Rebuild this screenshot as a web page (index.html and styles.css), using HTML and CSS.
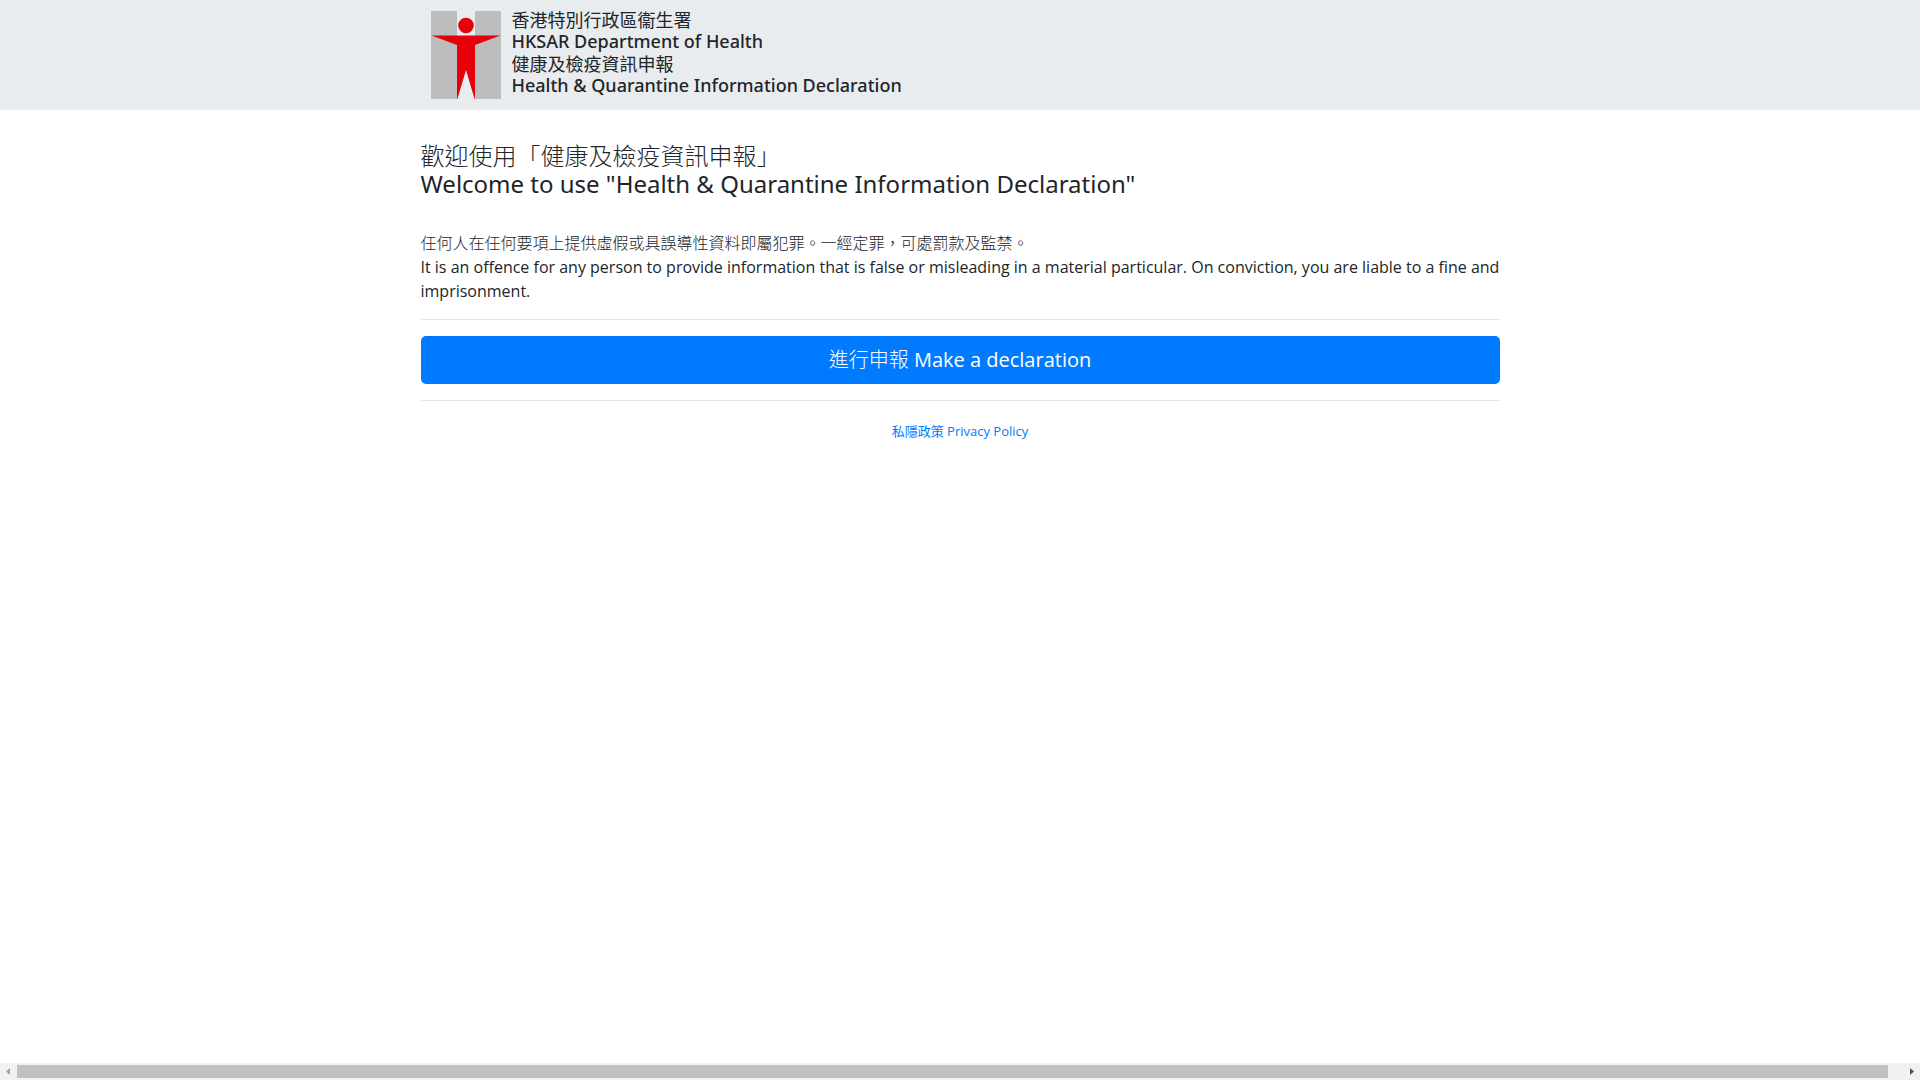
FILE: index.html
```html
<!DOCTYPE html>
<html lang="zh-Hant-HK">
<head>
<meta charset="utf-8">
<meta name="viewport" content="width=device-width, initial-scale=1">
<title>Health &amp; Quarantine Information Declaration</title>
<link rel="stylesheet" href="styles.css">
</head>
<body>
<header class="site-header">
  <div class="container brand">
    <svg class="brand-logo" viewBox="0 0 70 88" role="img" aria-label="Department of Health">
      <path fill="#bdbdbd" d="M0 0H26V88H0ZM44 0H70V88H44Z"/>
      <circle cx="35" cy="14.500" r="7.800" fill="#e60009"/>
      <path fill="#e60009" d="M0.500 24.500H69.500L44 34V88H43.600L35 59L26.400 88H26V34Z"/>
    </svg>
    <div class="brand-name">
      <div class="brand-zh">香港特別行政區衞生署</div>
      <div>HKSAR Department of Health</div>
      <div class="brand-zh">健康及檢疫資訊申報</div>
      <div>Health &amp; Quarantine Information Declaration</div>
    </div>
  </div>
</header>
<main class="container content">
  <h1 class="welcome"><span class="welcome-zh">歡迎使用「健康及檢疫資訊申報」</span><br>Welcome to use "Health &amp; Quarantine Information Declaration"</h1>
  <p class="notice"><span class="notice-zh">任何人在任何要項上提供虛假或具誤導性資料即屬犯罪。一經定罪，可處罰款及監禁。</span><br>It is an offence for any person to provide information that is false or misleading in a material particular. On conviction, you are liable to a fine and imprisonment.</p>
  <hr class="rule">
  <button class="declare" type="button"><span class="declare-zh">進行申報</span> Make a declaration</button>
  <hr class="rule">
  <p class="policy"><a class="policy-link" href="#privacy">私隱政策 Privacy Policy</a></p>
</main>
<div class="scrollbar" aria-hidden="true">
  <svg class="scroll-arrow" viewBox="0 0 17 17"><path fill="#a3a3a3" d="M10 5V12L6 8.500Z"/></svg>
  <div class="scroll-track"><div class="scroll-thumb"></div></div>
  <svg class="scroll-arrow" viewBox="0 0 17 17"><path fill="#505050" d="M7 5V12L11 8.500Z"/></svg>
</div>
</body>
</html>
```
FILE: styles.css
```css
*, *::before, *::after { box-sizing: border-box; }

body {
  display: flex;
  flex-direction: column;
  min-height: 100vh;
  margin: 0;
  background: #fff;
  color: #212529;
  font-family: "Open Sans", "Noto Sans CJK TC", sans-serif;
  font-size: 16px;
  line-height: 24px;
}

.container {
  width: 100%;
  max-width: 1079px;
  margin: 0 auto;
}

.site-header { background: #e9ecef; }

.brand {
  display: flex;
  align-items: flex-start;
  gap: 11px;
  padding: 11px 10px;
}

.brand-logo { width: 70px; height: 88px; flex: none; }

.brand-name {
  margin-top: -3px;
  font-family: "Noto Sans", sans-serif;
  font-size: 18px;
  line-height: 22px;
  font-weight: 500;
}

.brand-zh { font-family: "Noto Sans CJK TC", sans-serif; font-weight: 400; }

.content { flex: 1; padding: 32px 0; }

.welcome {
  margin: 0 0 33px;
  font-family: "Noto Sans", "Noto Sans CJK TC", sans-serif;
  font-size: 24px;
  line-height: 28px;
  font-weight: 400;
}

.welcome-zh, .notice-zh, .declare-zh { font-weight: 300; }

.notice { margin: 0; }

.rule {
  height: 1px;
  margin: 16px 0;
  border: 0;
  background: #e5e5e5;
}

.declare {
  display: block;
  width: 100%;
  padding: 9px 16px;
  border: 0;
  border-radius: 5px;
  background: #007bff;
  color: #fff;
  font: inherit;
  font-size: 20px;
  line-height: 30px;
  cursor: pointer;
}

.policy { margin: 18px 0 0; text-align: center; font-size: 13px; }

.policy-link { color: #007bff; text-decoration: none; }

.scrollbar {
  display: flex;
  height: 17px;
  background: #f1f1f1;
}

.scroll-arrow { width: 17px; height: 17px; flex: none; }

.scroll-track { flex: 1; padding: 2px 15px 2px 0; }

.scroll-thumb { height: 13px; background: #c1c1c1; }
```
